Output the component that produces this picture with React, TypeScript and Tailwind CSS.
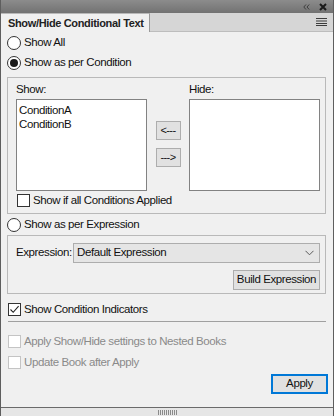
import React from "react";

const font = { fontFamily: '"Liberation Sans", Arial, sans-serif' };

function Radio({ checked }: { checked?: boolean }) {
  return (
    <div className="w-[14px] h-[14px] rounded-full border border-[#333333] bg-white flex items-center justify-center shrink-0">
      {checked && <div className="w-[8px] h-[8px] rounded-full bg-[#1a1a1a]" />}
    </div>
  );
}

function Check({ checked, disabled }: { checked?: boolean; disabled?: boolean }) {
  return (
    <div
      className={
        "w-[13px] h-[13px] border bg-white flex items-center justify-center shrink-0 " +
        (disabled ? "border-[#c4c4c4]" : "border-[#333333]")
      }
    >
      {checked && (
        <svg width="11" height="11" viewBox="0 0 11 11">
          <path d="M1.5 5.5 L4.2 8.3 L9.6 2.2" fill="none" stroke="#222" strokeWidth="1.1" />
        </svg>
      )}
    </div>
  );
}

export default function App() {
  return (
    <div
      className="w-[334px] h-[416px] bg-[#f0f0f0] border-x border-[#5e5e5e] flex flex-col text-[11.5px] text-[#111] tracking-[-0.4px] overflow-hidden whitespace-nowrap"
      style={font}
    >
      {/* title bar */}
      <div className="h-[13px] bg-gradient-to-b from-[#8c8c8c] to-[#727272] flex items-center justify-end pr-[6px] gap-[9px] shrink-0">
        <svg width="7" height="6" viewBox="0 0 7 6">
          <path d="M3 0.5 L0.8 3 L3 5.5 M6.2 0.5 L4 3 L6.2 5.5" fill="none" stroke="#3e3e3e" strokeWidth="1" />
        </svg>
        <svg width="8" height="8" viewBox="0 0 8 8">
          <path d="M1 1 L7 7 M7 1 L1 7" stroke="#1a1a1a" strokeWidth="2" />
        </svg>
      </div>
      {/* tab row */}
      <div className="h-[19px] bg-[#d6d6d6] flex items-stretch border-b border-[#bdbdbd] shrink-0">
        <div className="w-[149px] bg-[#f0f0f0] border-r border-[#9a9a9a] border-t border-t-[#b8b8b8] flex items-center pl-[7px] font-bold text-[11px] text-[#222] tracking-[-0.35px] -mb-px">
          Show/Hide Conditional Text
        </div>
        <div className="flex-1 flex items-center justify-end pr-[6px]">
          <svg width="11" height="8" viewBox="0 0 11 8">
            <path d="M0 0.5 H11 M0 3 H11 M0 5.5 H11 M0 7.5 H11" stroke="#3c3c3c" strokeWidth="1" />
          </svg>
        </div>
      </div>

      <div className="flex flex-col pl-[6px] pr-[7px]">
        <div className="h-[20px] mt-[1px] flex items-center gap-[2px]">
          <Radio />
          <span className="ml-[1px]">Show All</span>
        </div>
        <div className="h-[20px] flex items-center gap-[2px]">
          <Radio checked />
          <span className="ml-[1px]">Show as per Condition</span>
        </div>

        {/* group 1 */}
        <div className="mt-[4px] h-[137px] border border-[#b9b9b9] pl-[8px] pr-[5px] pt-[4px] flex flex-col">
          <div className="flex">
            <div className="flex flex-col w-[131px]">
              <div className="h-[14px] leading-[14px]">Show:</div>
              <div className="mt-[3px] h-[92px] bg-white border border-[#828282] px-[2px] pt-[3px] leading-[14px]">
                <div>ConditionA</div>
                <div>ConditionB</div>
              </div>
            </div>
            <div className="w-[42px] flex flex-col items-center pt-[39px] gap-[8px]">
              <div className="w-[25px] h-[19px] bg-[#e1e1e1] border border-[#adadad] flex items-center justify-center text-[11px] tracking-[-0.6px]">
                &lt;---
              </div>
              <div className="w-[25px] h-[19px] bg-[#e1e1e1] border border-[#adadad] flex items-center justify-center text-[11px] tracking-[-0.6px]">
                ---&gt;
              </div>
            </div>
            <div className="flex flex-col w-[131px]">
              <div className="h-[14px] leading-[14px]">Hide:</div>
              <div className="mt-[3px] h-[92px] bg-white border border-[#828282]" />
            </div>
          </div>
          <div className="mt-[2px] h-[15px] flex items-center gap-[3px] pl-[1px]">
            <Check />
            <span>Show if all Conditions Applied</span>
          </div>
        </div>

        <div className="h-[21px] flex items-center gap-[2px]">
          <Radio />
          <span className="ml-[1px]">Show as per Expression</span>
        </div>

        {/* group 2 */}
        <div className="h-[59px] border border-[#b9b9b9] pl-[8px] pr-[5px] pt-[7px] flex flex-col">
          <div className="flex items-center">
            <span className="w-[57px]">Expression:</span>
            <div className="flex-1 h-[20px] bg-[#e5e5e5] border border-[#adadad] flex items-center pl-[3px] pr-[5px]">
              <span className="flex-1">Default Expression</span>
              <svg width="9" height="6" viewBox="0 0 9 6">
                <path d="M0.5 0.8 L4.5 4.8 L8.5 0.8" fill="none" stroke="#5a5a5a" strokeWidth="1" />
              </svg>
            </div>
          </div>
          <div className="flex justify-end mt-[7px]">
            <div className="w-[87px] h-[20px] bg-[#e1e1e1] border border-[#adadad] flex items-center justify-center">
              Build Expression
            </div>
          </div>
        </div>

        <div className="h-[21px] mt-[5px] flex items-center gap-[3px] pl-[1px]">
          <Check checked />
          <span>Show Condition Indicators</span>
        </div>
        <div className="h-px bg-[#a0a0a0] ml-[1px] mt-[1px]" />

        <div className="h-[21px] mt-[9px] flex items-center gap-[3px] pl-[1px] text-[#8a8a8a]">
          <Check disabled />
          <span>Apply Show/Hide settings to Nested Books</span>
        </div>
        <div className="h-[21px] flex items-center gap-[3px] pl-[1px] text-[#8a8a8a]">
          <Check disabled />
          <span>Update Book after Apply</span>
        </div>
        <div className="flex justify-end mt-[1px] -mr-[2px]">
          <div className="w-[57px] h-[20px] bg-[#e1e1e1] border-2 border-[#0078d7] flex items-center justify-center">
            Apply
          </div>
        </div>
      </div>

      <div className="flex-1" />
      <div className="h-[9px] border-t border-[#6a6a6a] bg-[#e6e6e6] flex items-center justify-center shrink-0">
        <svg width="19" height="5" viewBox="0 0 19 5">
          <path d="M0.5 0 V5 M2.5 0 V5 M4.5 0 V5 M6.5 0 V5 M8.5 0 V5 M10.5 0 V5 M12.5 0 V5 M14.5 0 V5 M16.5 0 V5 M18.5 0 V5" stroke="#8a8a8a" strokeWidth="1" />
        </svg>
      </div>
    </div>
  );
}
